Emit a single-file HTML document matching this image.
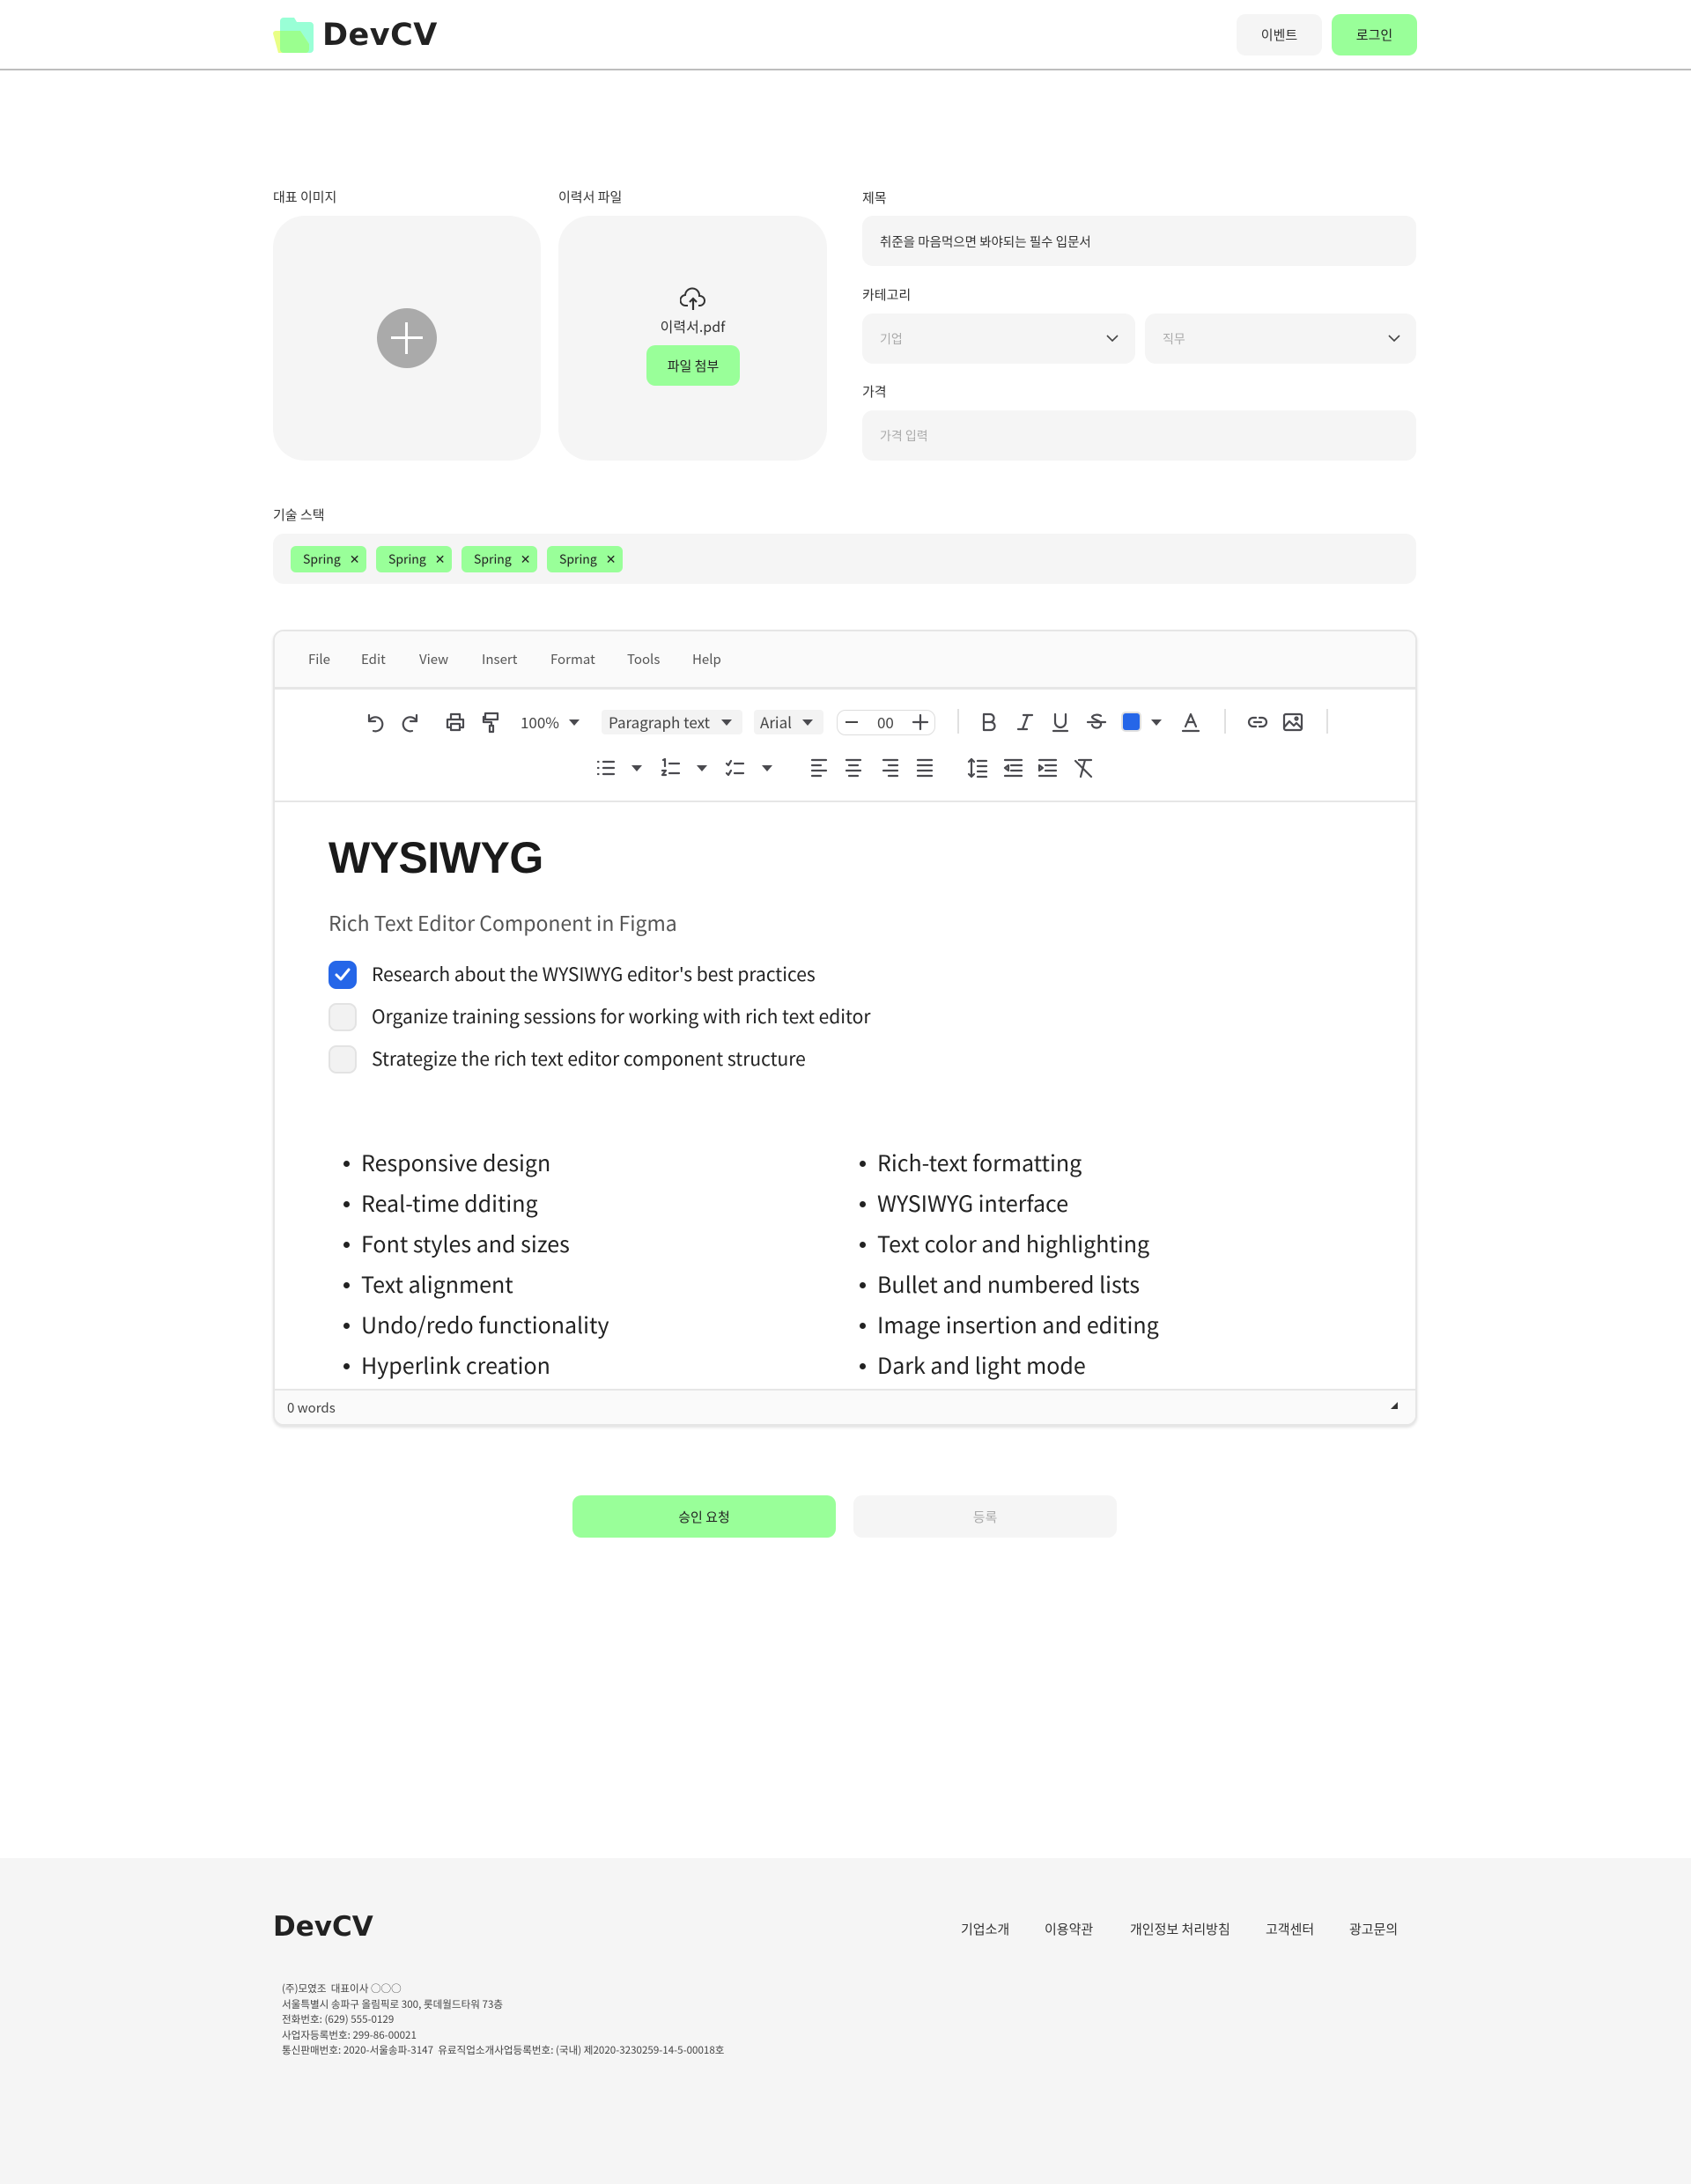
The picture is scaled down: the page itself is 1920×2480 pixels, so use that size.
<!DOCTYPE html>
<html><head><meta charset="utf-8">
<style>
*{margin:0;padding:0;box-sizing:border-box}
body{width:1920px;height:2480px;position:relative;background:#fff;font-family:"Noto Sans CJK KR","Liberation Sans",sans-serif;color:#222;overflow:hidden}
.a{position:absolute}
.lbl{font-size:15px;color:#333}
.box{background:#f5f5f5;border-radius:12px}
.btn{display:flex;align-items:center;justify-content:center;border-radius:10px;font-size:15px}
.ic{position:absolute;width:26px;height:26px;margin-left:-13px;margin-top:-13px}
.ic *{fill:none;stroke:#4a4a4f;stroke-width:2.2;stroke-linecap:round;stroke-linejoin:round}
.tri{position:absolute;width:0;height:0;border-left:6px solid transparent;border-right:6px solid transparent;border-top:7px solid #4a4a4f;margin-left:-6px;margin-top:-3px}
.sep{position:absolute;width:2px;height:28px;background:#e0e0e0;top:805px}
.tb{font-size:17px;color:#444}
.menu{font-size:15px;color:#555;top:738px}
.chk{position:absolute;left:373px;width:32px;height:32px;border-radius:9px;background:#f2f2f2;border:2px solid #e3e3e3}
.ct{position:absolute;left:422px;font-size:21px;color:#222}
.li{position:absolute;font-size:25px;color:#222}
.li:before{content:"";position:absolute;left:-20px;top:16px;width:7px;height:7px;border-radius:50%;background:#222}
.tag{position:absolute;top:620px;height:30px;width:86px;background:#99ff99;border-radius:6px;font-size:14px;display:flex;align-items:center;padding-left:14px;color:#222}
.tag span{margin-left:10px;font-size:14px}
.fl{position:absolute;top:2180px;font-size:15px;color:#333}
.ad{position:absolute;left:320px;font-size:11.6px;color:#444}
</style></head><body>

<!-- header -->
<svg class="a" style="left:308px;top:18px" width="52" height="44" viewBox="0 0 52 44">
<path d="M14 2h12l3 5h15a4 4 0 0 1 4 4v27a4 4 0 0 1-4 4H14a4 4 0 0 1-4-4V6a4 4 0 0 1 4-4z" fill="#99ffd6"/>
<path d="M2 20a3 3 0 0 1 3-3h28l10 15v6a4 4 0 0 1-4 4H8z" fill="#e8ff80" opacity=".95"/>
<path d="M10 17h23l10 15v6a4 4 0 0 1-4 4H14a4 4 0 0 1-4-4z" fill="#9bff8f"/>
</svg>
<div class="a" style="left:366px;top:20px;font-size:35px;font-weight:600;color:#222;letter-spacing:0.5px;font-family:'DejaVu Sans','Liberation Sans',sans-serif">DevCV</div>
<div class="a btn" style="left:1404px;top:16px;width:97px;height:47px;background:#f5f5f5;color:#333">이벤트</div>
<div class="a btn" style="left:1512px;top:16px;width:97px;height:47px;background:#99ff99;color:#222">로그인</div>
<div class="a" style="left:0;top:78px;width:1920px;height:2px;background:#bdbdbd"></div>

<!-- upload area -->
<div class="a lbl" style="left:310px;top:213px">대표 이미지</div>
<div class="a lbl" style="left:634px;top:213px">이력서 파일</div>
<div class="a box" style="left:310px;top:245px;width:304px;height:278px;border-radius:36px"></div>
<div class="a" style="left:428px;top:350px;width:68px;height:68px;border-radius:50%;background:#aaa"></div>
<div class="a" style="left:444px;top:382px;width:36px;height:3px;background:#fff"></div>
<div class="a" style="left:460px;top:366px;width:3px;height:36px;background:#fff"></div>
<div class="a box" style="left:634px;top:245px;width:305px;height:278px;border-radius:36px"></div>
<svg class="a" style="left:772px;top:326px" width="30" height="28" viewBox="0 0 30 28"><path d="M9 21H7a6 6 0 0 1-1-12 8 8 0 0 1 16 1 5 5 0 0 1 1 11h-2" fill="none" stroke="#333" stroke-width="2"/><path d="M15 26V13M11 17l4-4 4 4" fill="none" stroke="#333" stroke-width="2.2"/></svg>
<div class="a" style="left:634px;width:305px;top:358px;text-align:center;font-size:16px;color:#333">이력서.pdf</div>
<div class="a btn" style="left:734px;top:392px;width:106px;height:46px;background:#99ff99;color:#222">파일 첨부</div>

<div class="a lbl" style="left:979px;top:214px">제목</div>
<div class="a box" style="left:979px;top:245px;width:629px;height:57px"></div>
<div class="a" style="left:999px;top:264px;font-size:14.5px;color:#333">취준을 마음먹으면 봐야되는 필수 입문서</div>
<div class="a lbl" style="left:979px;top:324px">카테고리</div>
<div class="a box" style="left:979px;top:356px;width:310px;height:57px"></div>
<div class="a" style="left:999px;top:375px;font-size:14px;color:#aaa">기업</div>
<svg class="a" style="left:1255px;top:378px" width="16" height="12"><path d="M2 3l6 6 6-6" fill="none" stroke="#444" stroke-width="1.6"/></svg>
<div class="a box" style="left:1300px;top:356px;width:308px;height:57px"></div>
<div class="a" style="left:1320px;top:375px;font-size:14px;color:#aaa">직무</div>
<svg class="a" style="left:1575px;top:378px" width="16" height="12"><path d="M2 3l6 6 6-6" fill="none" stroke="#444" stroke-width="1.6"/></svg>
<div class="a lbl" style="left:979px;top:434px">가격</div>
<div class="a box" style="left:979px;top:466px;width:629px;height:57px"></div>
<div class="a" style="left:999px;top:485px;font-size:14px;color:#aaa">가격 입력</div>

<div class="a lbl" style="left:310px;top:574px">기술 스택</div>
<div class="a box" style="left:310px;top:606px;width:1298px;height:57px"></div>
<div class="tag" style="left:330px">Spring<span>✕</span></div>
<div class="tag" style="left:427px">Spring<span>✕</span></div>
<div class="tag" style="left:524px">Spring<span>✕</span></div>
<div class="tag" style="left:621px">Spring<span>✕</span></div>

<!-- editor -->
<div class="a" style="left:310px;top:715px;width:1299px;height:904px;border:2px solid #e6e6e6;border-radius:12px;box-shadow:0 2px 3px rgba(0,0,0,.12);background:#fff;overflow:hidden">
 <div style="height:66px;background:#fafafa;border-bottom:3px solid #e6e6e6"></div>
 <div style="position:absolute;left:0;top:192px;width:100%;height:2px;background:#e6e6e6"></div>
 <div style="position:absolute;left:0;bottom:0;width:100%;height:40px;background:#fafafa;border-top:2px solid #e6e6e6"></div>
</div>
<div class="a menu" style="left:350px">File</div>
<div class="a menu" style="left:410px">Edit</div>
<div class="a menu" style="left:476px">View</div>
<div class="a menu" style="left:547px">Insert</div>
<div class="a menu" style="left:625px">Format</div>
<div class="a menu" style="left:712px">Tools</div>
<div class="a menu" style="left:786px">Help</div>

<!-- toolbar row1 -->
<svg class="ic" style="left:425px;top:820px" viewBox="0 0 26 26"><path d="M7 5v7h7"/><path d="M7 12a8 8 0 1 1 5 11"/></svg>
<svg class="ic" style="left:467px;top:820px" viewBox="0 0 26 26"><path d="M19 5v7h-7"/><path d="M19 12a8 8 0 1 0-5 11"/></svg>
<svg class="ic" style="left:517px;top:820px" viewBox="0 0 26 26"><path d="M8 9V4h10v5M6 19H4V10h18v9h-2M8 15h10v7H8z"/></svg>
<svg class="ic" style="left:558px;top:820px" viewBox="0 0 26 26"><path d="M6 3h14v7H6zM6 7H4v6h9v4M11 17h4v7h-4z"/></svg>
<div class="a tb" style="left:591px;top:807px">100%</div>
<div class="tri" style="left:652px;top:820px"></div>
<div class="a" style="left:683px;top:806px;width:160px;height:28px;background:#f3f3f3;border-radius:4px"></div>
<div class="a tb" style="left:691px;top:807px">Paragraph text</div>
<div class="tri" style="left:825px;top:820px"></div>
<div class="a" style="left:856px;top:806px;width:79px;height:28px;background:#f3f3f3;border-radius:4px"></div>
<div class="a tb" style="left:863px;top:807px">Arial</div>
<div class="tri" style="left:917px;top:820px"></div>
<div class="a" style="left:950px;top:806px;width:112px;height:29px;border:1.5px solid #ddd;border-radius:10px"></div>
<div class="a" style="left:960px;top:819px;width:14px;height:2px;background:#444"></div>
<div class="a tb" style="left:996px;top:807px">00</div>
<svg class="ic" style="left:1045px;top:820px" viewBox="0 0 26 26"><path d="M13 5v16M5 13h16"/></svg>
<div class="sep" style="left:1087px"></div>
<svg class="ic" style="left:1123px;top:820px" viewBox="0 0 26 26"><path d="M7 4h7a4.5 4.5 0 0 1 0 9H7zM7 13h8a4.5 4.5 0 0 1 0 9H7z"/></svg>
<svg class="ic" style="left:1164px;top:820px" viewBox="0 0 26 26"><path d="M11 5h10M5 21h10M16 5l-6 16"/></svg>
<svg class="ic" style="left:1204px;top:820px" viewBox="0 0 26 26"><path d="M7 4v9a6 6 0 0 0 12 0V4M5 23h16"/></svg>
<svg class="ic" style="left:1245px;top:820px" viewBox="0 0 26 26"><path d="M18 6a6 4 0 0 0-10 1c0 3 10 4 10 8a5 4 0 0 1-10 1M3 13h20"/></svg>
<div class="a" style="left:1275px;top:810px;width:19px;height:19px;background:#2566e8;border-radius:3px;box-shadow:0 0 0 2px #e0e0e0"></div>
<div class="tri" style="left:1313px;top:820px"></div>
<svg class="ic" style="left:1352px;top:820px" viewBox="0 0 26 26"><path d="M7 18l6-14 6 14M9 13h8M4 23h18"/></svg>
<div class="sep" style="left:1390px"></div>
<svg class="ic" style="left:1428px;top:820px" viewBox="0 0 26 26"><path d="M11 8H8a5 5 0 0 0 0 10h3M15 8h3a5 5 0 0 1 0 10h-3M9 13h8"/></svg>
<svg class="ic" style="left:1468px;top:820px" viewBox="0 0 26 26"><rect x="3" y="4" width="20" height="18" rx="2"/><path d="M3 19l6-7 5 5 3-3 6 6"/><circle cx="17" cy="9" r="1.5"/></svg>
<div class="sep" style="left:1506px"></div>

<!-- toolbar row2 -->
<svg class="ic" style="left:688px;top:872px" viewBox="0 0 26 26"><path d="M10 6h12M10 13h12M10 20h12M4 6h.5M4 13h.5M4 20h.5"/></svg>
<div class="tri" style="left:723px;top:872px"></div>
<svg class="ic" style="left:762px;top:872px" viewBox="0 0 26 26"><path d="M11 8h11M11 19h11M4 4l2-1v8M3 16h4l-4 5h4"/></svg>
<div class="tri" style="left:797px;top:872px"></div>
<svg class="ic" style="left:835px;top:872px" viewBox="0 0 26 26"><path d="M12 8h10M12 19h10M3 8l2 2 3-5M3 19l2 2 3-5"/></svg>
<div class="tri" style="left:871px;top:872px"></div>
<svg class="ic" style="left:930px;top:872px" viewBox="0 0 26 26"><path d="M5 4h16M5 10h10M5 16h16M5 22h10"/></svg>
<svg class="ic" style="left:969px;top:872px" viewBox="0 0 26 26"><path d="M5 4h16M8 10h10M5 16h16M8 22h10"/></svg>
<svg class="ic" style="left:1011px;top:872px" viewBox="0 0 26 26"><path d="M5 4h16M11 10h10M5 16h16M11 22h10"/></svg>
<svg class="ic" style="left:1050px;top:872px" viewBox="0 0 26 26"><path d="M5 4h16M5 10h16M5 16h16M5 22h16"/></svg>
<svg class="ic" style="left:1110px;top:872px" viewBox="0 0 26 26"><path d="M6 3v20M3 6l3-3 3 3M3 20l3 3 3-3M13 5h10M13 11h10M13 17h10M13 23h10"/></svg>
<svg class="ic" style="left:1150px;top:872px" viewBox="0 0 26 26"><path d="M4 4h19M11 10h12M11 16h12M4 22h19M8 10l-4 3 4 3z"/></svg>
<svg class="ic" style="left:1189px;top:872px" viewBox="0 0 26 26"><path d="M4 4h19M11 10h12M11 16h12M4 22h19M4 10l4 3-4 3z"/></svg>
<svg class="ic" style="left:1230px;top:872px" viewBox="0 0 26 26"><path d="M8 4h14M15 4l-5 19M4 5l18 18"/></svg>

<!-- content -->
<div class="a" style="left:373px;top:945px;font-size:50px;font-weight:700;color:#1a1a1a;font-family:'Liberation Sans','Noto Sans CJK KR',sans-serif;letter-spacing:-0.5px">WYSIWYG</div>
<div class="a" style="left:373px;top:1030px;font-size:23px;color:#555">Rich Text Editor Component in Figma</div>
<div class="chk" style="top:1091px;background:#2566e8;border-color:#2566e8"></div>
<svg class="a" style="left:379px;top:1097px" width="20" height="20"><path d="M3 10l5 5 9-11" fill="none" stroke="#fff" stroke-width="3" stroke-linecap="round" stroke-linejoin="round"/></svg>
<div class="ct" style="top:1091px">Research about the WYSIWYG editor's best practices</div>
<div class="chk" style="top:1139px"></div>
<div class="ct" style="top:1139px">Organize training sessions for working with rich text editor</div>
<div class="chk" style="top:1187px"></div>
<div class="ct" style="top:1187px">Strategize the rich text editor component structure</div>

<div class="li" style="left:410px;top:1302px">Responsive design</div>
<div class="li" style="left:410px;top:1348px">Real-time dditing</div>
<div class="li" style="left:410px;top:1394px">Font styles and sizes</div>
<div class="li" style="left:410px;top:1440px">Text alignment</div>
<div class="li" style="left:410px;top:1486px">Undo/redo functionality</div>
<div class="li" style="left:410px;top:1532px">Hyperlink creation</div>
<div class="li" style="left:996px;top:1302px">Rich-text formatting</div>
<div class="li" style="left:996px;top:1348px">WYSIWYG interface</div>
<div class="li" style="left:996px;top:1394px">Text color and highlighting</div>
<div class="li" style="left:996px;top:1440px">Bullet and numbered lists</div>
<div class="li" style="left:996px;top:1486px">Image insertion and editing</div>
<div class="li" style="left:996px;top:1532px">Dark and light mode</div>

<div class="a" style="left:326px;top:1588px;font-size:15px;color:#444">0 words</div>
<svg class="a" style="left:1578px;top:1591px" width="10" height="10"><path d="M9 1v8H1z" fill="#333"/></svg>

<div class="a btn" style="left:650px;top:1698px;width:299px;height:48px;background:#99ff99;color:#222">승인 요청</div>
<div class="a btn" style="left:969px;top:1698px;width:299px;height:48px;background:#f5f5f5;color:#aaa">등록</div>

<!-- footer -->
<div class="a" style="left:0;top:2110px;width:1920px;height:370px;background:#f5f5f5"></div>
<div class="a" style="left:310px;top:2170px;font-size:31px;font-weight:600;color:#222;font-family:'DejaVu Sans','Liberation Sans',sans-serif">DevCV</div>
<div class="fl" style="left:1091px">기업소개</div>
<div class="fl" style="left:1186px">이용약관</div>
<div class="fl" style="left:1283px">개인정보 처리방침</div>
<div class="fl" style="left:1437px">고객센터</div>
<div class="fl" style="left:1532px">광고문의</div>
<div class="ad" style="top:2250px">(주)모였조 &nbsp;대표이사 ○○○</div>
<div class="ad" style="top:2268px">서울특별시 송파구 올림픽로 300, 롯데월드타워 73층</div>
<div class="ad" style="top:2285px">전화번호: (629) 555-0129</div>
<div class="ad" style="top:2303px">사업자등록번호: 299-86-00021</div>
<div class="ad" style="top:2320px">통신판매번호: 2020-서울송파-3147 &nbsp;유료직업소개사업등록번호: (국내) 제2020-3230259-14-5-00018호</div>
</body></html>
